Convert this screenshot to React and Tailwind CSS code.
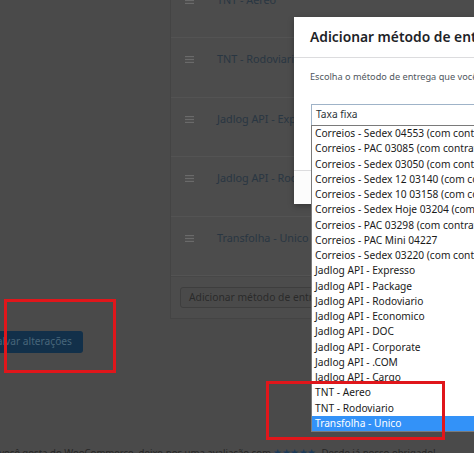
import React from "react";

const rows = [
  "TNT - Aereo",
  "TNT - Rodoviario",
  "Jadlog API - Expresso",
  "Jadlog API - Rodoviario",
  "Transfolha - Unico",
];

const options = [
  "Correios - Sedex 04553 (com contrato)",
  "Correios - PAC 03085 (com contrato)",
  "Correios - Sedex 03050 (com contrato)",
  "Correios - Sedex 12 03140 (com contrato)",
  "Correios - Sedex 10 03158 (com contrato)",
  "Correios - Sedex Hoje 03204 (com contrato)",
  "Correios - PAC 03298 (com contrato)",
  "Correios - PAC Mini 04227",
  "Correios - Sedex 03220 (com contrato)",
  "Jadlog API - Expresso",
  "Jadlog API - Package",
  "Jadlog API - Rodoviario",
  "Jadlog API - Economico",
  "Jadlog API - DOC",
  "Jadlog API - Corporate",
  "Jadlog API - .COM",
  "Jadlog API - Cargo",
  "TNT - Aereo",
  "TNT - Rodoviario",
  "Transfolha - Unico",
];

function Handle() {
  return (
    <svg width="9" height="7" viewBox="0 0 9 7" className="shrink-0">
      <rect x="0" y="0" width="9" height="1.2" fill="#6a6a6a" />
      <rect x="0" y="2.9" width="9" height="1.2" fill="#6a6a6a" />
      <rect x="0" y="5.8" width="9" height="1.2" fill="#6a6a6a" />
    </svg>
  );
}

export default function App() {
  return (
    <div
      className="relative w-[474px] h-[453px] overflow-hidden bg-[#4a4a4a]"
      style={{ fontFamily: '"Noto Sans", "Open Sans", sans-serif' }}
    >
      {/* page flow */}
      <div className="flex flex-col mt-[-21.5px]">
        <div className="flex">
          <div className="w-[170px] shrink-0" />
          <div className="w-[340px] shrink-0 border-l border-b border-[#444444] bg-[#4c4c4c]">
            {rows.map((r) => (
              <div
                key={r}
                className="h-[59.5px] border-b border-[#535353] flex items-start pt-[13px] pl-[14px] gap-[23px]"
              >
                <div className="pt-[5px]">
                  <Handle />
                </div>
                <span className="text-[10.8px] leading-[16px] text-[#293642] whitespace-nowrap">{r}</span>
              </div>
            ))}
            <div className="h-[42px] border-t border-[#474747] flex items-center pl-[9px]">
              <div className="h-[21px] px-[8px] flex items-center border border-[#3e3e3e] rounded-[3px] bg-[#4a4a4a] text-[10.3px] text-[#2a2a2a] whitespace-nowrap">
                Adicionar método de entrega
              </div>
            </div>
          </div>
        </div>

        <div className="mt-[12px] flex">
          <div className="ml-[-17px] h-[22px] w-[100px] rounded-[3px] bg-[#12304a] flex items-center justify-end pr-[11px] text-[10.2px] text-[#48667a] whitespace-nowrap">
            Salvar alterações
          </div>
        </div>

        <div className="mt-[93px] flex items-start whitespace-nowrap text-[9.6px] leading-[13px] text-[#262626]">
          <div className="w-[271px] shrink-0 overflow-hidden flex justify-end">
            <span>Se você gosta do WooCommerce, deixe-nos uma avaliação com</span>
          </div>
          <span className="ml-[2px] text-[#1d3a58] tracking-[-0.5px]">★★★★★</span>
          <span className="ml-[6px]">Desde já nosso obrigado!</span>
        </div>
      </div>

      {/* modal */}
      <div className="absolute left-[294px] top-[17px] w-[260px] h-[187px] bg-white flex flex-col shadow-[0_2px_6px_rgba(0,0,0,0.3)]">
        <div className="h-[41px] border-b border-[#dcdcde] flex items-center pl-[16px]">
          <span className="text-[13.8px] font-semibold text-[#1d2327] whitespace-nowrap">
            Adicionar método de entrega
          </span>
        </div>
        <div className="pl-[16px] pt-[12px] text-[9.2px] leading-[14px] text-[#50575e] whitespace-nowrap">
          Escolha o método de entrega que você deseja adicionar.
        </div>
        <div className="ml-[17px] mt-[20px] h-[22px] w-[220px] border border-[#9fb3c8] flex items-center pl-[4px] text-[10.2px] text-[#2c3338]">
          Taxa fixa
        </div>
        <div className="mt-auto h-[34px] border-t border-[#dcdcde] bg-[#fcfcfc]" />
      </div>

      {/* dropdown list */}
      <div className="absolute left-[311px] top-[125px] w-[200px] border border-[#7a7a7a] bg-white">
        {options.map((o, i) => (
          <div
            key={o}
            className={
              "h-[15.25px] leading-[15.25px] pl-[3px] text-[10.2px] whitespace-nowrap " +
              (i === options.length - 1 ? "bg-[#3392f8] text-white" : "text-[#1a1a1a]")
            }
          >
            {o}
          </div>
        ))}
      </div>

      {/* annotations */}
      <div className="absolute left-[4px] top-[299px] w-[112px] h-[74px] border-[3px] border-[#e0161b]" />
      <div className="absolute left-[266px] top-[381px] w-[179px] h-[59px] border-[3px] border-[#e0161b]" />
    </div>
  );
}
